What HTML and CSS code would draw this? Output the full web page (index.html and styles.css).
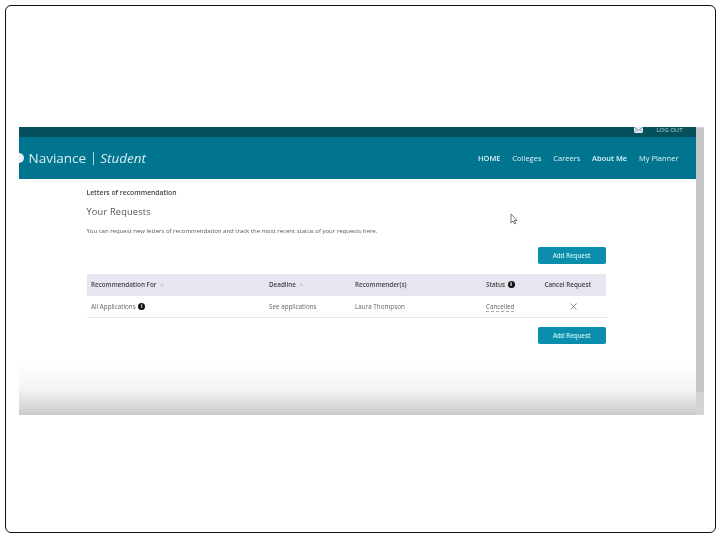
FILE: index.html
```html
<!DOCTYPE html>
<html lang="en">
<head>
<meta charset="utf-8">
<title>Naviance Student</title>
<link rel="stylesheet" href="styles.css">
</head>
<body>
<div class="slide">
  <div class="shot">
    <div class="page">
      <header>
        <div class="topbar">
          <svg class="mail" width="9" height="6" viewBox="0 0 9 6"><rect width="9" height="6" fill="#e4eef0"/><path d="M0 0l4.500 3.500L9 0M0 6l3-3.500M9 6L6 2.500" fill="none" stroke="#5f8d97" stroke-width=".8"/></svg>
          <span class="logout">LOG OUT</span>
        </div>
        <div class="navbar">
          <div class="brand">
            <span class="dot"></span>
            <span class="name">Naviance</span>
            <span class="sep"></span>
            <span class="role">Student</span>
          </div>
          <nav class="links">
            <span class="strong">HOME</span>
            <span>Colleges</span>
            <span>Careers</span>
            <span class="strong">About Me</span>
            <span>My Planner</span>
          </nav>
        </div>
      </header>
      <main class="content">
        <div class="crumb">Letters of recommendation</div>
        <h1 class="title">Your Requests</h1>
        <p class="intro">You can request new letters of recommendation and track the most recent status of your requests here.</p>
        <div class="actions"><span class="btn">Add Request</span></div>
        <div class="table">
          <div class="row head">
            <span>Recommendation For <i class="sort">^</i></span>
            <span>Deadline <i class="sort">^</i></span>
            <span>Recommender(s)</span>
            <span class="with-info">Status <b class="info">i</b></span>
            <span class="cancel">Cancel Request</span>
          </div>
          <div class="row body">
            <span class="with-info">All Applications <b class="info">i</b></span>
            <span>See applications</span>
            <span>Laura Thompson</span>
            <span class="status">Cancelled</span>
            <span class="cancel"><svg class="cross" width="7" height="7" viewBox="0 0 7 7"><path d="M.5.500l6 6M6.500.500l-6 6" stroke="#8a8a8a" stroke-width="1"/></svg></span>
          </div>
        </div>
        <div class="actions lower"><span class="btn">Add Request</span></div>
      </main>
      <svg class="cursor" width="8" height="12" viewBox="0 0 8 12"><path d="M1 1v9l2-2 1.500 3 1.300-.6L4.500 7.500H7z" fill="#fff" stroke="#555" stroke-width=".8"/></svg>
      <div class="fade"></div>
    </div>
    <div class="scrollbar"><div class="thumb"></div></div>
  </div>
</div>
</body>
</html>
```

FILE: styles.css
```css
* { box-sizing: border-box; }
html, body { margin: 0; height: 540px; background: #fff; overflow: hidden; }
body {
  padding: 5px 4px 7px 5px;
  font-family: "Open Sans", "Noto Sans", sans-serif;
  color: #333;
}
.slide {
  height: 528px;
  border: 1.5px solid #111;
  border-radius: 6px;
  padding: 120.500px 0 0 12.500px;
}
.shot {
  position: relative;
  width: 685px;
  height: 288px;
  display: flex;
  overflow: hidden;
  background: #fff;
}
.page { position: relative; flex: 1; min-width: 0; filter: blur(.35px); }
.topbar {
  height: 10px;
  background: #04505c;
  display: flex;
  justify-content: flex-end;
  align-items: flex-start;
  overflow: hidden;
  padding-right: 13px;
  gap: 13px;
  color: #b9d3d8;
  font-size: 6px;
  line-height: 6px;
}
.navbar {
  height: 42px;
  background: #01758f;
  display: flex;
  justify-content: space-between;
  align-items: center;
  color: #dff3f7;
  padding-right: 17px;
}
.brand { display: flex; align-items: center; margin-top: 1px; font-size: 13.500px; color: #d9eef2; }
.dot { width: 5px; height: 10px; margin-right: 5px; background: #e6f3f5; border-radius: 0 5px 5px 0; }
.sep { width: 1px; height: 13px; background: #a8d4dc; margin: 0 6.500px; }
.role { font-style: italic; }
.links { display: flex; gap: 11.800px; font-size: 7.500px; margin-top: 1px; }
.strong { font-weight: 600; }
.content { padding: 9px 0 0 68px; width: 589px; }
.crumb { font-size: 6.800px; font-weight: 600; line-height: 10px; color: #444; }
.title { margin: 7px 0 0; font-size: 9.200px; font-weight: 400; line-height: 14px; color: #555; letter-spacing: .2px; }
.intro { margin: 8px 0 0; font-size: 6px; line-height: 9px; color: #555; }
.actions { display: flex; justify-content: flex-end; margin-top: 11px; width: 519px; }
.actions.lower { margin-top: 9px; }
.btn {
  width: 68px;
  height: 17px;
  line-height: 17px;
  text-align: center;
  background: #0a8eab;
  color: #c6edf5;
  border-radius: 2px;
  font-size: 6.200px;
  font-weight: 600;
}
.table { margin-top: 10px; width: 521px; }
.row {
  display: grid;
  grid-template-columns: 178px 86px 131px 44px 1fr;
  align-items: center;
  padding: 0 2px 0 4.500px;
  font-size: 6.300px;
}
.head { width: 519px; height: 22px; background: #e6e6f0; font-weight: 600; color: #444; }
.body { height: 22px; border-bottom: 1px solid #e6e6e6; color: #666; }
.sort { font-style: normal; font-weight: 400; color: #999; font-size: 6px; margin-left: 2px; }
.with-info { display: flex; align-items: center; gap: 2.500px; }
.info {
  width: 7px;
  height: 7px;
  border-radius: 50%;
  background: #111;
  color: #fff;
  font-size: 5px;
  line-height: 7px;
  text-align: center;
}
.status { justify-self: start; border-bottom: 1px dashed #aaa; line-height: 8px; margin-top: 3px; }
.cancel { text-align: center; padding-left: 2px; }
.cross { display: block; margin: 0 0 0 38px; }
.cursor { position: absolute; left: 491px; top: 86px; }
.fade {
  position: absolute;
  left: 0;
  right: 0;
  bottom: 0;
  height: 52px;
  background: linear-gradient(#fff0, #f4f4f4 50%, #cbcbcb);
}
.scrollbar { width: 8px; background: #d4d4d4; padding-top: 1px; }
.thumb { height: 264px; background: #c6c6c6; }
```
